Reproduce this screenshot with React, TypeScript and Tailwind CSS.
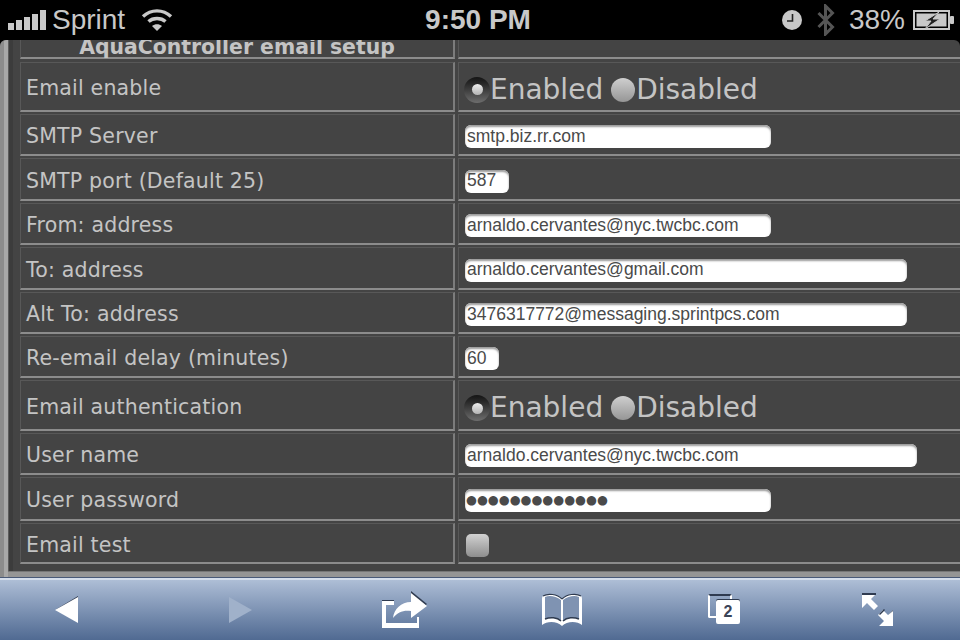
const sans = "font-['DejaVu_Sans',sans-serif]";

function RadioOn() {
  return (
    <span className="flex h-[26px] w-[26px] shrink-0 items-center justify-center rounded-full bg-gradient-to-b from-[#141414] to-[#6e6e6e]">
      <span className="h-[11px] w-[11px] rounded-full bg-gradient-to-b from-[#eeeeee] to-[#b4b4b4]" />
    </span>
  );
}

function RadioOff() {
  return <span className="block h-[24px] w-[24px] shrink-0 rounded-full bg-gradient-to-b from-[#cfcfcf] to-[#969696]" />;
}

function EnabledPicker() {
  return (
    <div className={`flex items-center pt-[2px] pl-[5px] text-[28px] leading-none text-[#c4c4c4] ${sans}`}>
      <RadioOn />
      <span>Enabled</span>
      <span className="ml-[8px] block">
        <RadioOff />
      </span>
      <span className="ml-[1px]">Disabled</span>
    </div>
  );
}

function Input({ width, value }: { width: string; value: string }) {
  return (
    <div
      className={`ml-[6px] flex h-[23px] items-center overflow-hidden whitespace-nowrap rounded-[6px] bg-white pl-[2px] text-[17.5px] leading-none text-[#4a4a4a] shadow-[inset_0_2px_2px_#9a9a9a] font-['Liberation_Sans',sans-serif] ${width}`}
    >
      {value}
    </div>
  );
}

function Row({ label, height, children }: { label: string; height: string; children?: React.ReactNode }) {
  return (
    <div className={`flex gap-[3px] ${height}`}>
      <div
        className={`flex w-[435px] shrink-0 items-center border-t border-r-2 border-b-2 border-l border-t-[#585858] border-r-[#7c7c7c] border-b-[#8c8c8c] border-l-[#585858] pt-[4px] pl-[5px] text-[20.5px] tracking-[0.2px] text-[#c4c4c4] ${sans}`}
      >
        {label}
      </div>
      <div className="flex flex-1 items-center border-t border-b-2 border-l border-t-[#585858] border-b-[#8c8c8c] border-l-[#585858] pt-[4px]">
        {children}
      </div>
    </div>
  );
}

function SignalBars() {
  return (
    <div className="flex items-end gap-[2px]">
      <span className="h-[7px] w-[6px] bg-[#c8c8c8]" />
      <span className="h-[10px] w-[6px] bg-[#c8c8c8]" />
      <span className="h-[13px] w-[6px] bg-[#c8c8c8]" />
      <span className="h-[16px] w-[6px] bg-[#c8c8c8]" />
      <span className="h-[20px] w-[6px] bg-[#c8c8c8]" />
    </div>
  );
}

function Wifi() {
  return (
    <svg width="32" height="24" viewBox="0 0 32 24" fill="none" stroke="#c8c8c8" strokeWidth="3.4">
      <path d="M2 8.5C10 1 22 1 30 8.5" />
      <path d="M7.5 13.5C12 9.5 20 9.5 24.5 13.5" />
      <path d="M16 23l-5-5c3-2.4 7-2.4 10 0z" fill="#c8c8c8" stroke="none" />
    </svg>
  );
}

function Clock() {
  return (
    <svg width="20" height="20" viewBox="0 0 20 20">
      <circle cx="10" cy="10" r="10" fill="#c8c8c8" />
      <path d="M10.5 4v7H5" fill="none" stroke="#222222" strokeWidth="1.6" />
    </svg>
  );
}

function Bluetooth() {
  return (
    <svg width="18" height="32" viewBox="0 0 18 32" fill="none" stroke="#555555" strokeWidth="3">
      <path d="M1.5 9l14 14-7 7V2l7 7-14 14" />
    </svg>
  );
}

function Battery() {
  return (
    <svg width="42" height="20" viewBox="0 0 42 20">
      <rect x="1" y="1" width="35" height="18" fill="none" stroke="#c8c8c8" strokeWidth="2" />
      <rect x="3.5" y="3.5" width="30" height="13" fill="#c8c8c8" />
      <rect x="37" y="6" width="4" height="8" rx="1" fill="#c8c8c8" />
      <path d="M26 2L12 11h6l-6 8 15-10h-7z" fill="#222222" stroke="#c8c8c8" strokeWidth="1" />
    </svg>
  );
}

function StatusBar() {
  return (
    <div className="flex h-[40px] shrink-0 items-center bg-black pr-[5px] pl-[8px] text-[#c8c8c8] font-['Liberation_Sans',sans-serif]">
      <div className="flex w-[416px] items-center">
        <SignalBars />
        <span className="ml-[6px] text-[28px] leading-none">Sprint</span>
        <span className="ml-[16px]">
          <Wifi />
        </span>
      </div>
      <div className="w-[108px] text-center text-[28px] leading-none font-bold whitespace-nowrap">9:50 PM</div>
      <div className="ml-auto flex items-center">
        <Clock />
        <span className="ml-[15px]">
          <Bluetooth />
        </span>
        <span className="ml-[14px] text-[28px] leading-none">38%</span>
        <span className="ml-[8px]">
          <Battery />
        </span>
      </div>
    </div>
  );
}

function BackIcon({ flip, color }: { flip?: boolean; color: string }) {
  return (
    <svg width="24" height="30" viewBox="0 0 24 30" className={flip ? "-scale-x-100" : ""}>
      <path d="M0 15L23 1v3z" fill="#2f3b50" opacity={flip ? 0 : 1} />
      <path d="M0 15L23 2v26z" fill={color} />
    </svg>
  );
}

function ShareIcon() {
  return (
    <svg width="46" height="38" viewBox="0 0 46 38">
      <path d="M0 9h12v2H0z" fill="#2f3b50" />
      <path d="M0 11h12v4H4v18h31v-6h2v11H0z" fill="#ffffff" transform="translate(0 -1)" />
      <path d="M29 1l16 13-16 13z" fill="#2f3b50" transform="translate(0 -1)" />
      <path d="M29 2l16 13-16 12v-7c-8-1-13 1-18 7 1-9 8-16 18-16z" fill="#ffffff" />
    </svg>
  );
}

function BookIcon() {
  return (
    <svg width="42" height="34" viewBox="0 0 42 34" fill="none">
      <path d="M21 6C16 1 7 0 2 3c-1 1-1 2-1 4v25C6 28 16 28 21 33c5-5 15-5 20-1V7c0-2 0-3-1-4-5-3-14-2-19 3z" fill="#ffffff" />
      <path d="M20 7C15 3 8 2 4 4v22c5-2 12-2 16 2zM22 7c5-4 12-5 16-3v22c-5-2-12-2-16 2z" fill="#7f93b2" />
      <path d="M21 6C16 1 7 0 2 3M21 6c5-5 14-6 19-3" stroke="#2f3b50" strokeWidth="1.2" />
      <path d="M4 26c5-2 12-2 16 2M22 28c4-4 11-4 16-2" stroke="#2f3b50" strokeWidth="1.5" />
    </svg>
  );
}

function TabsIcon() {
  return (
    <div className="relative h-[32px] w-[33px]">
      <div className="absolute top-0 left-0 h-[24px] w-[24px] rounded-[2px] border-2 border-white border-t-[#2f3b50]" />
      <div className="absolute top-[6px] left-[8px] flex h-[24px] w-[24px] items-center justify-center rounded-[2px] bg-white text-[16px] leading-none font-bold text-[#3a4456] font-['Liberation_Sans',sans-serif] shadow-[0_-1px_0_#2f3b50]">
        2
      </div>
    </div>
  );
}

function ExpandIcon() {
  return (
    <svg width="32" height="34" viewBox="0 0 32 34">
      <path d="M0 0h14v2H0z" fill="#2f3b50" />
      <path d="M0 2h13L9 6l7 7-4 4-7-7-5 5z" fill="#ffffff" />
      <path d="M31 17v16H17l5-5-6-6 1-1 4-4 5 5z" fill="#ffffff" />
      <path d="M22 16l-5 5 1 1 5-5zM31 17l-5 5 5-4z" fill="#2f3b50" />
    </svg>
  );
}

function Toolbar() {
  return (
    <div className="relative flex h-[62px] shrink-0 items-center border-t-2 border-t-[#d5deec] bg-gradient-to-b from-[#aebed6] to-[#506a92] pb-[1px]">
      <div className="flex w-[79px] justify-end">
        <BackIcon color="#ffffff" />
      </div>
      <div className="ml-[149px] flex w-[24px]">
        <BackIcon flip color="#a0b1ca" />
      </div>
      <div className="ml-[130px] flex w-[46px]">
        <ShareIcon />
      </div>
      <div className="ml-[113px] flex w-[42px]">
        <BookIcon />
      </div>
      <div className="ml-[125px]">
        <TabsIcon />
      </div>
      <div className="ml-[121px]">
        <ExpandIcon />
      </div>
      <div className="absolute right-0 bottom-0 left-0 flex justify-between">
        <span className="h-[6px] w-[6px] rounded-tr-[6px] bg-transparent shadow-[-2px_2px_0_#000000]" />
        <span className="h-[6px] w-[6px] rounded-tl-[6px] bg-transparent shadow-[2px_2px_0_#000000]" />
      </div>
    </div>
  );
}

export default function App() {
  return (
    <div className="flex h-[640px] w-[960px] flex-col overflow-hidden bg-black">
      <StatusBar />
      <div className="flex h-[537px] overflow-hidden rounded-t-[6px] bg-[#444444]">
        <div className="w-[4px] shrink-0 bg-[#8c8c8c]" />
        <div className="w-[4px] shrink-0 bg-[#a8a8a8]" />
        <div className="flex min-w-0 flex-1 flex-col">
          <div className="flex flex-1 border-l border-l-[#5c5c5c]">
            <div className="w-[4px] shrink-0 bg-[#3c3c3c]" />
            <div className="flex flex-1 flex-col gap-[2px] pl-[7px]">
              <div className="mb-[1px] flex h-[19px] gap-[3px] overflow-hidden">
                <div
                  className={`flex w-[435px] shrink-0 items-end justify-center border-r-2 border-b-2 border-l border-r-[#7c7c7c] border-b-[#8c8c8c] border-l-[#585858] text-[20.4px] leading-none font-bold text-[#c4c4c4] ${sans}`}
                >
                  <span>AquaController email setup</span>
                </div>
                <div className="flex-1 border-b-2 border-l border-b-[#8c8c8c] border-l-[#585858]" />
              </div>
              <Row label="Email enable" height="h-[50px]">
                <EnabledPicker />
              </Row>
              <Row label="SMTP Server" height="h-[42px]">
                <Input width="w-[306px]" value="smtp.biz.rr.com" />
              </Row>
              <Row label="SMTP port (Default 25)" height="h-[43px]">
                <Input width="w-[44px]" value="587" />
              </Row>
              <Row label="From: address" height="h-[42px]">
                <Input width="w-[306px]" value="arnaldo.cervantes@nyc.twcbc.com" />
              </Row>
              <Row label="To: address" height="h-[43px]">
                <Input width="w-[442px]" value="arnaldo.cervantes@gmail.com" />
              </Row>
              <Row label="Alt To: address" height="h-[42px]">
                <Input width="w-[442px]" value="3476317772@messaging.sprintpcs.com" />
              </Row>
              <Row label="Re-email delay (minutes)" height="h-[42px]">
                <Input width="w-[34px]" value="60" />
              </Row>
              <Row label="Email authentication" height="h-[51px]">
                <EnabledPicker />
              </Row>
              <Row label="User name" height="h-[42px]">
                <Input width="w-[452px]" value="arnaldo.cervantes@nyc.twcbc.com" />
              </Row>
              <Row label="User password" height="h-[44px]">
                <div className={`ml-[6px] flex h-[23px] w-[306px] items-center overflow-hidden whitespace-nowrap rounded-[6px] bg-white pl-[1px] text-[12.5px] leading-none text-[#4a4a4a] shadow-[inset_0_2px_2px_#9a9a9a] ${sans}`}>
                  ●●●●●●●●●●●●●
                </div>
              </Row>
              <Row label="Email test" height="h-[41px]">
                <div className="ml-[7px] h-[23px] w-[23px] rounded-[5px] bg-gradient-to-b from-[#d2d2d2] to-[#8e8e8e]" />
              </Row>
            </div>
          </div>
          <div className="h-[6px] shrink-0 border-t border-t-[#777777] bg-[#959595]" />
        </div>
      </div>
      <div className="h-[1px] shrink-0 bg-[#4a5a78]" />
      <Toolbar />
    </div>
  );
}
